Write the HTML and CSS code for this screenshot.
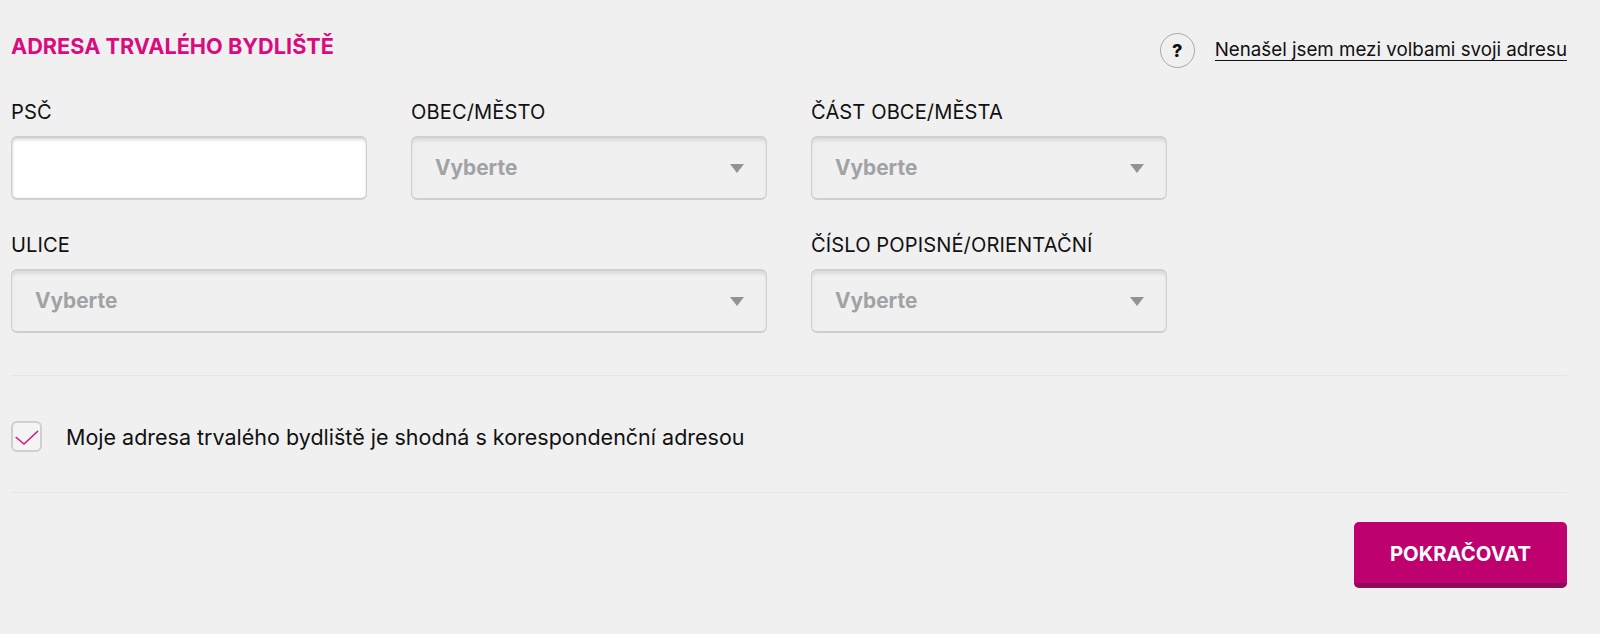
FILE: index.html
```html
<!DOCTYPE html>
<html lang="cs">
<head>
<meta charset="utf-8">
<title>Adresa trvalého bydliště</title>
<link rel="stylesheet" href="styles.css">
</head>
<body>
<main class="page">
  <header class="head">
    <h2 class="title">ADRESA TRVALÉHO BYDLIŠTĚ</h2>
    <div class="help">
      <span class="help-icon">?</span>
      <a class="help-link" href="#">Nenašel jsem mezi volbami svoji adresu</a>
    </div>
  </header>
  <section class="fields">
    <div class="field">
      <label class="label">PSČ</label>
      <div class="input"></div>
    </div>
    <div class="field">
      <label class="label">OBEC/MĚSTO</label>
      <div class="select"><span>Vyberte</span><i class="arrow"></i></div>
    </div>
    <div class="field">
      <label class="label">ČÁST OBCE/MĚSTA</label>
      <div class="select"><span>Vyberte</span><i class="arrow"></i></div>
    </div>
    <div class="field wide">
      <label class="label">ULICE</label>
      <div class="select"><span>Vyberte</span><i class="arrow"></i></div>
    </div>
    <div class="field">
      <label class="label">ČÍSLO POPISNÉ/ORIENTAČNÍ</label>
      <div class="select"><span>Vyberte</span><i class="arrow"></i></div>
    </div>
  </section>
  <div class="check-row">
    <span class="checkbox">
      <svg class="check-icon" width="31" height="31" viewBox="0 0 31 31" fill="none"><path d="M4.7 16 L13 23 L27 10" stroke="#d9127f" stroke-width="1.6"/></svg>
    </span>
    <span class="check-text">Moje adresa trvalého bydliště je shodná s korespondenční adresou</span>
  </div>
  <div class="actions">
    <button class="btn" type="button">POKRAČOVAT</button>
  </div>
</main>
</body>
</html>
```
FILE: styles.css
```css
* { box-sizing: border-box; }
html, body { margin: 0; padding: 0; }
body {
  background: #f0f0f0;
  color: #111;
  font-family: "Inter", "Lato", sans-serif;
  height: 634px;
  overflow: hidden;
}
.page {
  width: 1556px;
  margin-left: 11px;
}
.head {
  display: flex;
  justify-content: space-between;
  height: 101px;
}
.title {
  margin: 33px 0 0;
  font-size: 21.7px;
  line-height: 26px;
  font-weight: 700;
  color: #d90b7d;
}
.help {
  display: flex;
  align-items: center;
  height: 35px;
  margin-top: 33px;
  gap: 20px;
}
.help-icon {
  width: 35px;
  height: 35px;
  flex: none;
  border: 1px solid #a9a9a9;
  border-radius: 50%;
  display: flex;
  align-items: center;
  justify-content: center;
  font-size: 18px;
  font-weight: 800;
}
.help-link {
  color: #111;
  font-size: 18.75px;
  line-height: 20px;
  white-space: nowrap;
  text-decoration: none;
  border-bottom: 1px solid #111;
}
.fields {
  display: grid;
  grid-template-columns: repeat(3, 356px);
  column-gap: 44px;
  row-gap: 34px;
}
.wide { grid-column: span 2; }
.label {
  display: block;
  font-size: 20.1px;
  letter-spacing: 0.1px;
  line-height: 22px;
  height: 35px;
}
.input, .select {
  height: 64px;
  border-style: solid;
  border-color: #cfcfcf;
  border-width: 2px 1px 2px 1px;
  border-radius: 6px;
}
.input {
  background: #fff;
  box-shadow: inset 0 2px 3px #ddd, inset 1px 0 2px #e4e4e4;
}
.select {
  display: flex;
  align-items: center;
  justify-content: space-between;
  padding: 0 22px 0 23px;
  background: #f0f0f0;
  box-shadow: inset 0 3px 3px #dcdcdc;
  color: #9fa3a5;
  font-size: 20.8px;
  font-weight: 700;
}
.select span { margin-top: -2px; }
.arrow {
  width: 0;
  height: 0;
  border-left: 7.5px solid transparent;
  border-right: 7.5px solid transparent;
  border-top: 9px solid #8f9496;
}
.check-row {
  margin-top: 42px;
  height: 118px;
  border-top: 1px solid #e6e6e6;
  border-bottom: 1px solid #e6e6e6;
  display: flex;
  align-items: center;
  gap: 24px;
}
.checkbox {
  width: 31px;
  height: 31px;
  flex: none;
  border: 2px solid #cfcfcf;
  border-radius: 6px;
  background: #f4f4f4;
  display: flex;
  align-items: center;
  justify-content: center;
  margin-top: 5px;
}
.check-icon { flex: none; }
.check-text {
  font-size: 21.5px;
  line-height: 28px;
  margin-top: 5px;
}
.actions {
  display: flex;
  justify-content: flex-end;
  margin-top: 29px;
}
.btn {
  width: 213px;
  height: 66px;
  border: 0;
  border-bottom: 5px solid #8f0a5a;
  border-radius: 5px;
  padding-top: 3px;
  background: #bf006f;
  color: #fff;
  font-family: inherit;
  font-size: 20.3px;
  font-weight: 700;
}
```
